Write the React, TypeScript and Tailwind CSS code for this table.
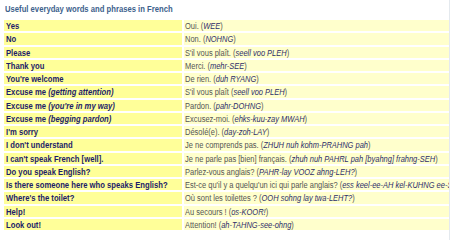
const rows: { en: string; enNote?: string; fr: string; pr: string; after?: string }[] = [
  { en: "Yes", fr: "Oui. (", pr: "WEE", after: ")" },
  { en: "No", fr: "Non. (", pr: "NOHNG", after: ")" },
  { en: "Please", fr: "S'il vous plaît. (", pr: "seell voo PLEH", after: ")" },
  { en: "Thank you", fr: "Merci. (", pr: "mehr-SEE", after: ")" },
  { en: "You're welcome", fr: "De rien. (", pr: "duh RYANG", after: ")" },
  { en: "Excuse me ", enNote: "(getting attention)", fr: "S'il vous plaît (", pr: "seell voo PLEH", after: ")" },
  { en: "Excuse me ", enNote: "(you're in my way)", fr: "Pardon. (", pr: "pahr-DOHNG", after: ")" },
  { en: "Excuse me ", enNote: "(begging pardon)", fr: "Excusez-moi. (", pr: "ehks-kuu-zay MWAH", after: ")" },
  { en: "I'm sorry", fr: "Désolé(e). (", pr: "day-zoh-LAY", after: ")" },
  { en: "I don't understand", fr: "Je ne comprends pas. (", pr: "ZHUH nuh kohm-PRAHNG pah", after: ")" },
  { en: "I can't speak French [well].", fr: "Je ne parle pas [bien] français. (", pr: "zhuh nuh PAHRL pah [byahng] frahng-SEH", after: ")" },
  { en: "Do you speak English?", fr: "Parlez-vous anglais? (", pr: "PAHR-lay VOOZ ahng-LEH?", after: ")" },
  { en: "Is there someone here who speaks English?", fr: "Est-ce qu'il y a quelqu'un ici qui parle anglais? (", pr: "ess keel-ee-AH kel-KUHNG ee-SEE kee PAHRL ahng-LEH?", after: ")" },
  { en: "Where's the toilet?", fr: "Où sont les toilettes ? (", pr: "OOH sohng lay twa-LEHT?", after: ")" },
  { en: "Help!", fr: "Au secours ! (", pr: "os-KOOR!", after: ")" },
  { en: "Look out!", fr: "Attention! (", pr: "ah-TAHNG-see-ohng", after: ")" },
];

export default function App() {
  return (
    <div
      className="w-[450px] h-[240px] overflow-hidden bg-white border-r border-[#e4e9ee] text-[9.6px] leading-[11px]"
      style={{ fontFamily: '"Liberation Sans", Arial, sans-serif' }}
    >
      <div className="pl-[5px] pt-[3px] h-[20px] font-bold text-[#3d5f8c]">
        <span className="inline-block origin-left scale-x-[0.8] whitespace-nowrap">Useful everyday words and phrases in French</span>
      </div>
      <div className="ml-[4px] grid grid-cols-[178px_265px] auto-rows-[11.27px] gap-[2px]">
        {rows.map((r) => (
          <>
            <div key={r.en + r.pr + "a"} className="bg-[#ffff99] pl-[2px] font-bold text-[#1c1c68] whitespace-nowrap leading-[11.27px]">
              <span className="inline-block origin-left scale-x-[0.8]">
                {r.en}
                {r.enNote && <i>{r.enNote}</i>}
              </span>
            </div>
            <div key={r.en + r.pr + "b"} className="bg-[#ffffcc] pl-[1px] text-[#555555] whitespace-nowrap leading-[11.27px]">
              <span className="inline-block origin-left scale-x-[0.78]">
                {r.fr}
                <i className="text-[#2e2e6a]">{r.pr}</i>
                {r.after}
              </span>
            </div>
          </>
        ))}
      </div>
    </div>
  );
}
